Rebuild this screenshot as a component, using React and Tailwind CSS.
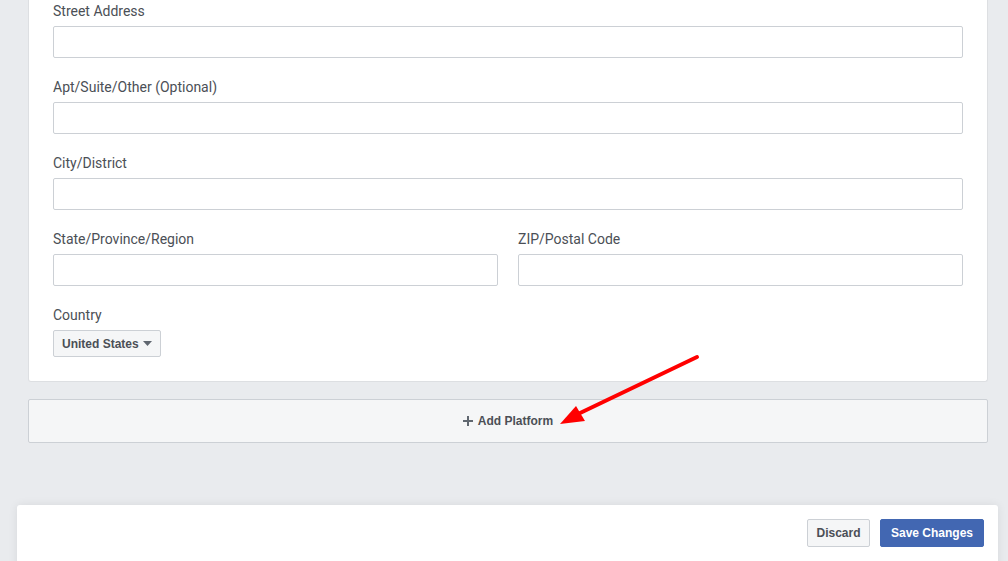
import React from "react";

const labelCls = "block text-[14px] leading-[18px] text-[#4b4f56] mb-[6px]";
const inputCls = "block w-full h-[32px] border border-[#ccd0d5] bg-white rounded-[2px]";

function Field({ label, className = "" }) {
  return (
    <div className={className}>
      <label className={labelCls}>{label}</label>
      <div className={inputCls}></div>
    </div>
  );
}

export default function App() {
  return (
    <div
      className="relative w-[1008px] h-[561px] overflow-hidden bg-[#e9ebee]"
      style={{ fontFamily: "Roboto, 'Liberation Sans', Arial, sans-serif" }}
    >
      <div className="pl-[28px] pr-[20px]">
        <div className="bg-white border-x border-b border-[#dddfe2] rounded-b-[3px] px-[24px] pt-[2px] pb-[24px]">
          <Field label="Street Address" className="mb-[20px]" />
          <Field label="Apt/Suite/Other (Optional)" className="mb-[20px]" />
          <Field label="City/District" className="mb-[20px]" />
          <div className="flex gap-[20px] mb-[20px]">
            <Field label="State/Province/Region" className="flex-1" />
            <Field label="ZIP/Postal Code" className="flex-1" />
          </div>
          <div>
            <label className="block text-[14px] leading-[18px] text-[#4b4f56] mb-[6px]">Country</label>
            <div
              className="inline-flex items-center whitespace-nowrap h-[27px] px-[8px] border border-[#ccd0d5] bg-[#f5f6f7] rounded-[2px] text-[12px] font-bold text-[#4b4f56]"
              style={{ fontFamily: "'Liberation Sans', Arial, sans-serif" }}
            >
              United States
              <svg width="9" height="5" viewBox="0 0 9 5" className="ml-[4px]">
                <path d="M0 0 L9 0 L4.5 5 Z" fill="#606770" />
              </svg>
            </div>
          </div>
        </div>
        <div
          className="mt-[17px] h-[44px] flex items-center justify-center bg-[#f5f6f7] border border-[#ccd0d5] rounded-[2px] text-[12px] font-bold text-[#4b4f56]"
          style={{ fontFamily: "'Liberation Sans', Arial, sans-serif" }}
        >
          <svg width="10" height="10" viewBox="0 0 10 10" className="mr-[5px]">
            <path d="M5 0 V10 M0 5 H10" stroke="#606770" strokeWidth="2" />
          </svg>
          Add Platform
        </div>
      </div>

      <div className="absolute left-[17px] right-[10px] top-[505px] h-[80px] bg-white rounded-[3px] shadow-[0_0_10px_rgba(0,0,0,0.08)]">
        <div
          className="flex justify-end gap-[10px] pt-[14px] pr-[14px]"
          style={{ fontFamily: "'Liberation Sans', Arial, sans-serif" }}
        >
          <div className="h-[28px] w-[63px] flex items-center justify-center bg-[#f5f6f7] border border-[#ccd0d5] rounded-[2px] text-[12px] font-bold text-[#4b4f56]">
            Discard
          </div>
          <div className="h-[28px] w-[104px] flex items-center justify-center bg-[#4267b2] border border-[#4267b2] rounded-[2px] text-[12px] font-bold text-white">
            Save Changes
          </div>
        </div>
      </div>

      <svg className="absolute inset-0 pointer-events-none" width="1008" height="561">
        <line x1="697" y1="357" x2="578" y2="414" stroke="#ff0000" strokeWidth="4" strokeLinecap="round" />
        <path d="M560 424 L576 406 L585 421 Z" fill="#ff0000" />
      </svg>
    </div>
  );
}
